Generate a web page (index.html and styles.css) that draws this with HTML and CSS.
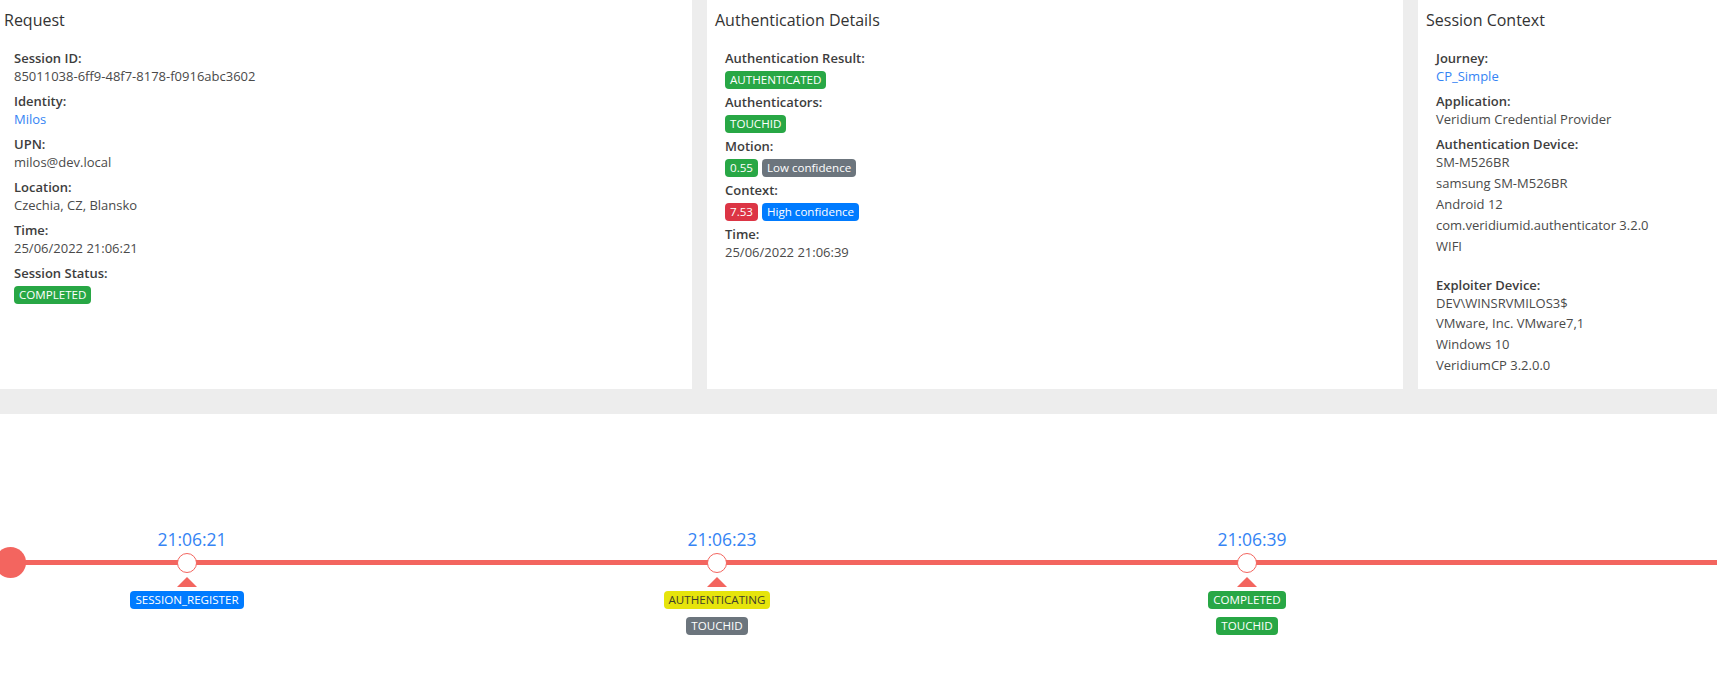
FILE: index.html
```html
<!DOCTYPE html>
<html lang="en">
<head>
    <meta charset="UTF-8">
    <meta name="viewport" content="width=device-width, initial-scale=1.0">
    <title>Session Details</title>
    <link rel="stylesheet" href="styles.css">
</head>
<body>
    <div class="details">
        <div class="card">
            <h3 class="card-title">Request</h3>
            <div class="fields">
                <div class="field">
                    <div class="field-label">Session ID:</div>
                    <div class="field-value">85011038-6ff9-48f7-8178-f0916abc3602</div>
                </div>
                <div class="field">
                    <div class="field-label">Identity:</div>
                    <div class="field-value"><a href="#">Milos</a></div>
                </div>
                <div class="field">
                    <div class="field-label">UPN:</div>
                    <div class="field-value">milos@dev.local</div>
                </div>
                <div class="field">
                    <div class="field-label">Location:</div>
                    <div class="field-value">Czechia, CZ, Blansko</div>
                </div>
                <div class="field">
                    <div class="field-label">Time:</div>
                    <div class="field-value">25/06/2022 21:06:21</div>
                </div>
                <div class="field">
                    <div class="field-label">Session Status:</div>
                    <div class="badges"><span class="badge badge-success">COMPLETED</span></div>
                </div>
            </div>
        </div>

        <div class="card">
            <h3 class="card-title">Authentication Details</h3>
            <div class="fields">
                <div class="field">
                    <div class="field-label">Authentication Result:</div>
                    <div class="badges"><span class="badge badge-success">AUTHENTICATED</span></div>
                </div>
                <div class="field">
                    <div class="field-label">Authenticators:</div>
                    <div class="badges"><span class="badge badge-success">TOUCHID</span></div>
                </div>
                <div class="field">
                    <div class="field-label">Motion:</div>
                    <div class="badges">
                        <span class="badge badge-success">0.55</span>
                        <span class="badge badge-secondary">Low confidence</span>
                    </div>
                </div>
                <div class="field">
                    <div class="field-label">Context:</div>
                    <div class="badges">
                        <span class="badge badge-danger">7.53</span>
                        <span class="badge badge-primary">High confidence</span>
                    </div>
                </div>
                <div class="field">
                    <div class="field-label">Time:</div>
                    <div class="field-value">25/06/2022 21:06:39</div>
                </div>
            </div>
        </div>

        <div class="card">
            <h3 class="card-title">Session Context</h3>
            <div class="fields">
                <div class="field">
                    <div class="field-label">Journey:</div>
                    <div class="field-value"><a href="#">CP_Simple</a></div>
                </div>
                <div class="field">
                    <div class="field-label">Application:</div>
                    <div class="field-value">Veridium Credential Provider</div>
                </div>
                <div class="field">
                    <div class="field-label">Authentication Device:</div>
                    <div class="device-lines">
                        <div>SM-M526BR</div>
                        <div>samsung SM-M526BR</div>
                        <div>Android 12</div>
                        <div>com.veridiumid.authenticator 3.2.0</div>
                        <div>WIFI</div>
                    </div>
                </div>
                <div class="field field-spaced">
                    <div class="field-label">Exploiter Device:</div>
                    <div class="device-lines">
                        <div>DEV\WINSRVMILOS3$</div>
                        <div>VMware, Inc. VMware7,1</div>
                        <div>Windows 10</div>
                        <div>VeridiumCP 3.2.0.0</div>
                    </div>
                </div>
            </div>
        </div>
    </div>

    <div class="timeline">
        <div class="timeline-start"></div>
        <div class="timeline-nodes">
            <div class="node">
                <div class="node-time">21:06:21</div>
                <div class="node-dot"></div>
                <div class="node-arrow"></div>
                <span class="badge badge-primary">SESSION_REGISTER</span>
            </div>
            <div class="node">
                <div class="node-time">21:06:23</div>
                <div class="node-dot"></div>
                <div class="node-arrow"></div>
                <span class="badge badge-warning">AUTHENTICATING</span>
                <span class="badge badge-secondary">TOUCHID</span>
            </div>
            <div class="node">
                <div class="node-time">21:06:39</div>
                <div class="node-dot"></div>
                <div class="node-arrow"></div>
                <span class="badge badge-success">COMPLETED</span>
                <span class="badge badge-success">TOUCHID</span>
            </div>
        </div>
    </div>
</body>
</html>
```

FILE: styles.css
```css
body {
    font-family: 'Open Sans', 'Noto Sans', sans-serif;
    font-size: 13px;
    color: #4a4a4a;
    margin: 0;
    background-color: #fff;
    overflow: hidden;
}

a {
    color: #3584f4;
    text-decoration: none;
}

/* top row of detail cards */
.details {
    display: flex;
    align-items: stretch;
    gap: 15px;
    background-color: #ededed;
    padding-bottom: 25px;
    margin-left: -4px;
}

.card {
    flex: 0 0 696px;
    box-sizing: border-box;
    background-color: #fff;
    padding: 8px 8px 6px;
}

.card-title {
    font-size: 16px;
    font-weight: 400;
    line-height: 24px;
    color: #333;
    margin: 0 0 17px;
}

.fields {
    padding-left: 10px;
}

.field {
    margin-bottom: 7px;
}

.field-label {
    font-weight: 600;
    line-height: 18px;
    color: #3d3d3d;
}

.field-value {
    line-height: 18px;
}

.device-lines {
    line-height: 20.9px;
    margin-top: -1px;
}

.field-spaced {
    margin-top: 19px;
}

.badges {
    display: flex;
    gap: 4px;
    margin-top: 4px;
    margin-bottom: -3px;
}

.badge {
    display: inline-block;
    font-size: 11.6px;
    line-height: 18px;
    height: 18px;
    padding: 0 5px;
    border-radius: 4px;
    color: #fff;
    white-space: nowrap;
}

.badge-success {
    background-color: #28a745;
}

.badge-secondary {
    background-color: #6c757d;
}

.badge-danger {
    background-color: #dc3545;
}

.badge-primary {
    background-color: #007bff;
}

.badge-warning {
    background-color: #e6e40c;
    color: #3f3f2a;
}

/* timeline: red track drawn as a hard-stop background band */
.timeline {
    display: flex;
    align-items: flex-start;
    padding-top: 115px;
    height: 170px;
    background: linear-gradient(to bottom,
        transparent 146px,
        #f3655f 146px,
        #f3655f 151px,
        transparent 151px);
}

.timeline-start {
    flex: 0 0 31px;
    height: 31px;
    border-radius: 50%;
    background-color: #f3655f;
    margin-top: 18px;
    margin-left: -5px;
}

.timeline-nodes {
    display: flex;
    gap: 370px;
    margin-left: 81px;
}

.node {
    width: 160px;
    display: flex;
    flex-direction: column;
    align-items: center;
}

.node-time {
    font-size: 17.5px;
    line-height: 20px;
    color: #3584f4;
    padding-left: 10px;
}

.node-dot {
    width: 20px;
    height: 20px;
    box-sizing: border-box;
    border: 1px solid #f3655f;
    border-radius: 50%;
    background-color: #fff;
    margin-top: 4px;
}

.node-arrow {
    width: 0;
    height: 0;
    border-left: 10px solid transparent;
    border-right: 10px solid transparent;
    border-bottom: 10px solid #f3655f;
    margin: 4px 0;
}

.node .badge + .badge {
    margin-top: 8px;
}
```
